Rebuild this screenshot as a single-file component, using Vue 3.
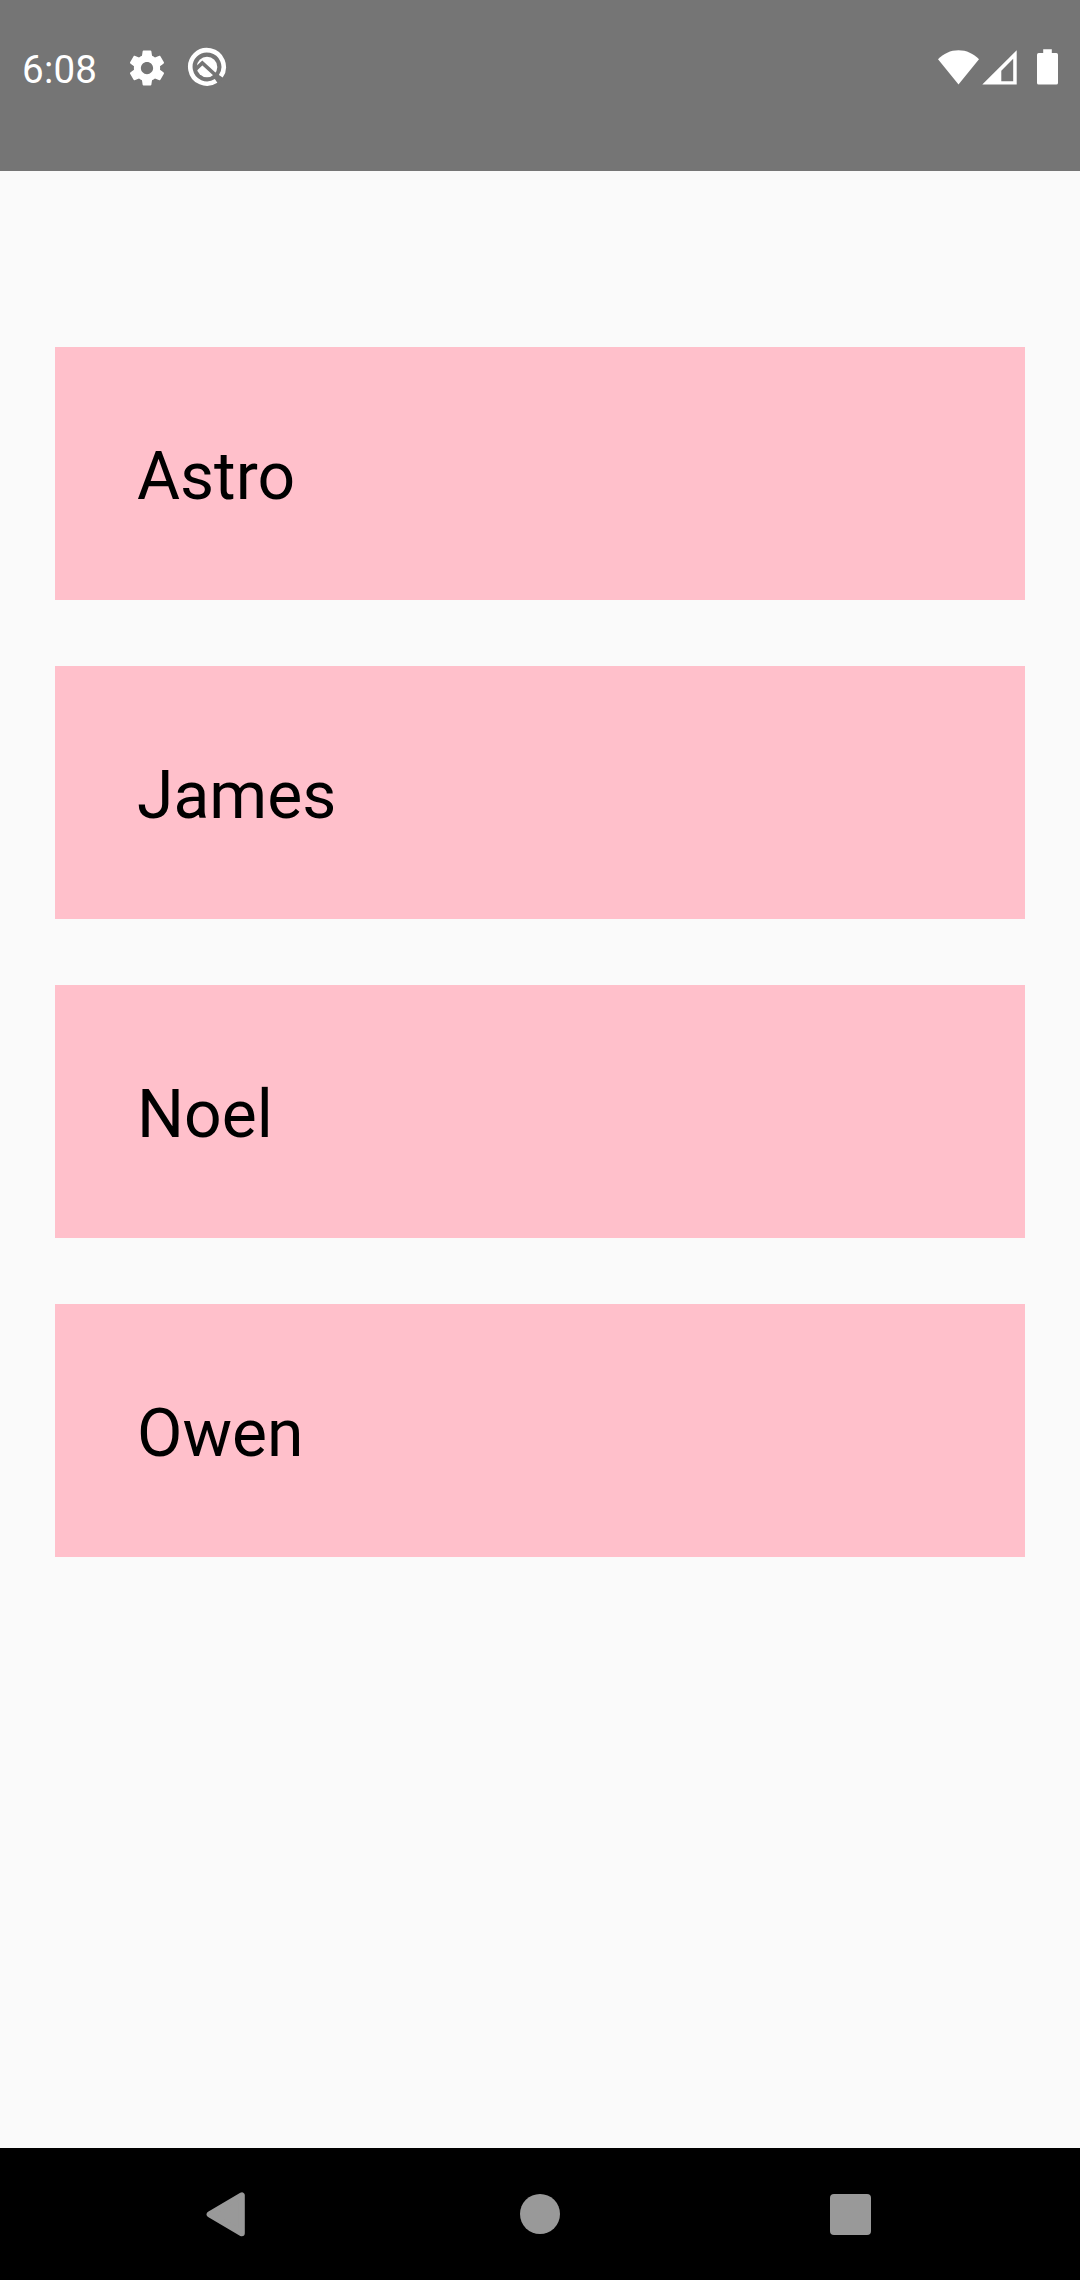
<script setup>
const names = ['Astro', 'James', 'Noel', 'Owen']
</script>

<template>
  <div class="screen">
    <header class="status">
      <span class="clock">6:08</span>
      <svg class="gear" width="42" height="42" viewBox="0 0 24 24">
        <path fill="#fff" d="M19.43 12.98c.04-.32.07-.64.07-.98s-.03-.66-.07-.98l2.11-1.65c.19-.15.24-.42.12-.64l-2-3.46c-.12-.22-.39-.3-.61-.22l-2.49 1c-.52-.4-1.08-.73-1.69-.98l-.38-2.65C14.46 2.18 14.25 2 14 2h-4c-.25 0-.46.18-.49.42l-.38 2.65c-.61.25-1.17.59-1.69.98l-2.49-1c-.23-.09-.49 0-.61.22l-2 3.46c-.13.22-.07.49.12.64l2.11 1.65c-.04.32-.07.65-.07.98s.03.66.07.98l-2.11 1.65c-.19.15-.24.42-.12.64l2 3.46c.12.22.39.3.61.22l2.49-1c.52.4 1.08.73 1.69.98l.38 2.65c.03.24.24.42.49.42h4c.25 0 .46-.18.49-.42l.38-2.65c.61-.25 1.17-.59 1.69-.98l2.49 1c.23.09.49 0 .61-.22l2-3.46c.12-.22.07-.49-.12-.64l-2.11-1.65zM12 15.5c-1.93 0-3.5-1.57-3.5-3.5s1.57-3.5 3.5-3.5 3.5 1.57 3.5 3.5-1.57 3.5-3.5 3.5z" />
      </svg>
      <svg class="query" width="40" height="40" viewBox="0 0 40 40">
        <path fill="none" stroke="#fff" stroke-width="4.6" d="M29.1 33.9A16.7 16.7 0 1 1 33.8 29.3" />
        <circle cx="20" cy="20" r="10.3" fill="#fff" />
        <path fill="none" stroke="#757575" stroke-width="3.7" d="M8.500 22.300 15.300 16 34.500 33.500" />
      </svg>
      <svg class="signals" width="124" height="40" viewBox="936 47 124 40" fill="#fff">
        <path d="M958.5 84.5 938 59.3C943.5 53.7 950.5 50.3 958.5 50.3S973.500 53.700 979 59.300Z" />
        <path fill-rule="evenodd" d="M982.300 84.600H1016.700V50.200ZM1001.300 81.200V70.700L1013.200 58.800V81.200Z" />
        <path d="M1043.200 49.300H1051.800V53H1056.300Q1058 53 1058 54.700V82.900Q1058 84.600 1056.300 84.600H1038.700Q1037 84.600 1037 82.900V54.700Q1037 53 1038.700 53H1043.200Z" />
      </svg>
    </header>
    <main class="list">
      <div v-for="name in names" :key="name" class="card">{{ name }}</div>
    </main>
    <nav class="nav">
      <svg width="44" height="50" viewBox="0 0 44 50">
        <path fill="#999" stroke="#999" stroke-width="6" stroke-linejoin="round" d="M6.600 25.300 38.800 6.300V44.300Z" />
      </svg>
      <span class="home"></span>
      <span class="recent"></span>
    </nav>
  </div>
</template>

<style>
body {
  margin: 0;
}
</style>

<style scoped>
.screen {
  display: flex;
  flex-direction: column;
  width: 1080px;
  height: 2280px;
  background: #fafafa;
  font-family: Roboto, sans-serif;
}
.status {
  display: flex;
  align-items: flex-start;
  box-sizing: border-box;
  height: 171px;
  padding: 47px 20px 0 22px;
  background: #757575;
}
.clock {
  width: 103.5px;
  color: #fff;
  font-size: 38.5px;
  letter-spacing: 0.25px;
  line-height: 45px;
}
.gear {
  margin-top: -0.5px;
}
.query {
  margin-left: 19.8px;
}
.signals {
  margin-left: auto;
}
.list {
  display: flex;
  flex: 1;
  flex-direction: column;
  gap: 66px;
  padding: 176px 55px 0;
}
.card {
  box-sizing: border-box;
  height: 253px;
  padding: 91px 82px 0;
  background: #ffc0cb;
  color: #000;
  font-size: 66px;
  line-height: 77px;
}
.nav {
  display: flex;
  align-items: center;
  height: 132px;
  background: #000;
}
.nav svg {
  margin-left: 203px;
}
.home {
  width: 40px;
  height: 40px;
  margin-left: 273px;
  border-radius: 50%;
  background: #999;
}
.recent {
  width: 41px;
  height: 41px;
  margin-left: 270px;
  border-radius: 4px;
  background: #999;
}
</style>
